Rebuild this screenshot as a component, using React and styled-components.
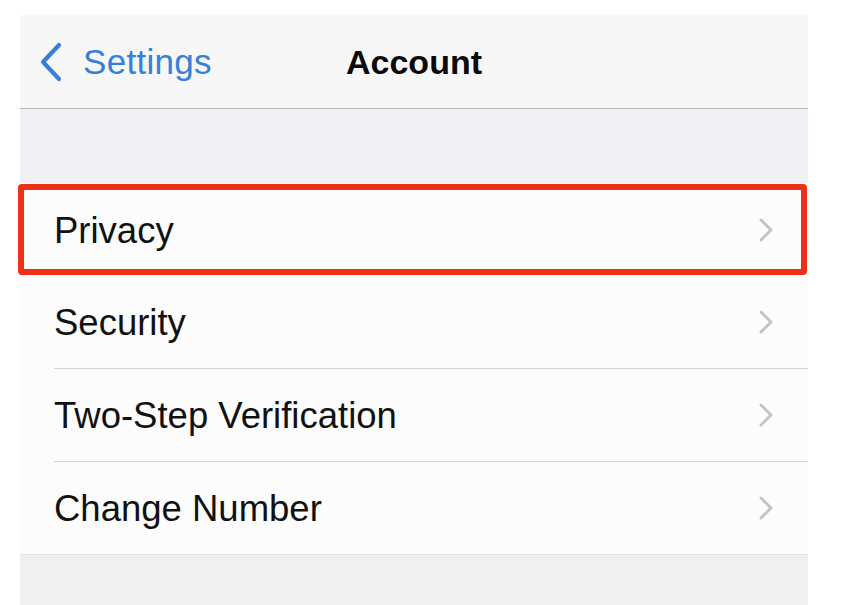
import styled, { createGlobalStyle } from "styled-components";

const Global = createGlobalStyle`
  html, body { margin: 0; padding: 0; background: #ffffff; }
  body { font-family: "Liberation Sans", Arial, sans-serif; }
`;

const Page = styled.div`
  width: 845px;
  height: 605px;
  overflow: hidden;
  background: #ffffff;
  padding-top: 15px;
  box-sizing: border-box;
`;

const Screen = styled.div`
  margin-left: 20px;
  width: 788px;
  height: 590px;
  background: #f0f0f2;
  display: flex;
  flex-direction: column;
`;

const NavBar = styled.div`
  height: 94px;
  background: #f7f7f8;
  border-bottom: 1px solid #b9b9bc;
  display: grid;
  grid-template-columns: 1fr auto 1fr;
  align-items: center;
  box-sizing: border-box;
`;

const Back = styled.div`
  display: flex;
  align-items: center;
  gap: 19px;
  padding-left: 18px;
  color: #3580da;
  font-size: 35px;
  letter-spacing: 0.3px;
`;

const Title = styled.div`
  font-size: 34px;
  font-weight: 700;
  color: #0a0a0a;
  padding-top: 2px;
`;

const Gap = styled.div`
  height: 74px;
  background: #f0f0f4;
`;

const List = styled.div`
  background: #fcfcfc;
  border-bottom: 1px solid #e2e2e4;
`;

const Row = styled.div`
  position: relative;
  height: 93px;
  padding-left: 34px;
  display: flex;
  &:last-child { height: 92px; }
  ${(p) =>
    p.$highlight &&
    `
    &::after {
      content: "";
      position: absolute;
      top: 1px;
      left: -2px;
      right: 1px;
      bottom: 1px;
      border: 6px solid #f02f17;
      border-radius: 4px;
      pointer-events: none;
    }
  `}
`;

const RowInner = styled.div`
  flex: 1;
  display: flex;
  align-items: center;
  justify-content: space-between;
  padding-right: 34px;
  border-bottom: ${(p) => (p.$plain ? "none" : "1px solid #d4d4d6")};
`;

const Label = styled.span`
  font-size: 36.5px;
  color: #111111;
  padding-top: 2px;
`;

const Bottom = styled.div`
  flex: 1;
  background: #f0f0f0;
`;

const BackChevron = () => (
  <svg width="26" height="40" viewBox="0 0 26 40">
    <path d="M21 3 L5 20 L21 37" fill="none" stroke="#3580da" strokeWidth="4.2" strokeLinecap="round" strokeLinejoin="round" />
  </svg>
);

const Chevron = () => (
  <svg width="16" height="26" viewBox="0 0 16 26">
    <path d="M3 3 L13 13 L3 23" fill="none" stroke="#c4c4c8" strokeWidth="3" strokeLinecap="round" strokeLinejoin="round" />
  </svg>
);

const items = ["Privacy", "Security", "Two-Step Verification", "Change Number"];

export default function App() {
  return (
    <Page>
      <Global />
      <Screen>
        <NavBar>
          <Back>
            <BackChevron />
            <span>Settings</span>
          </Back>
          <Title>Account</Title>
          <div />
        </NavBar>
        <Gap />
        <List>
          {items.map((it, i) => (
            <Row key={it} $highlight={i === 0}>
              <RowInner $plain={i === 0 || i === items.length - 1}>
                <Label>{it}</Label>
                <Chevron />
              </RowInner>
            </Row>
          ))}
        </List>
        <Bottom />
      </Screen>
    </Page>
  );
}
